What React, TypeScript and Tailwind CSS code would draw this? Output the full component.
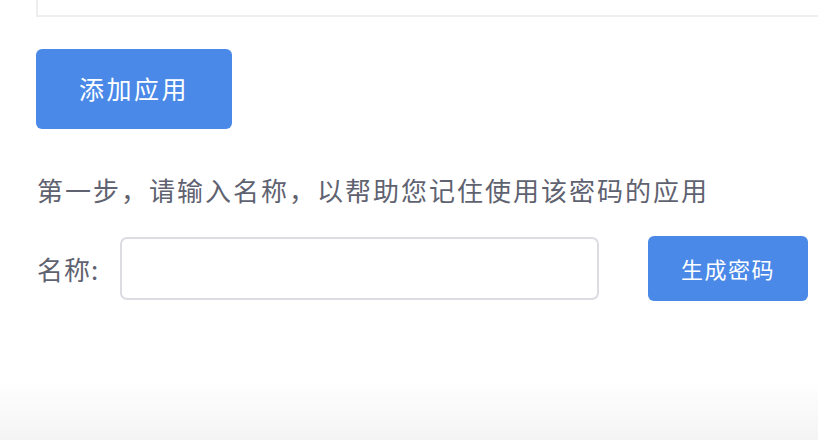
import React from "react";

const font = { fontFamily: '"Noto Sans CJK SC", "Noto Sans", sans-serif' };

export default function App() {
  return (
    <div className="w-[818px] h-[440px] bg-white flex flex-col overflow-hidden" style={font}>
      <div className="ml-[36px] h-[17px] border-l-2 border-b-2 border-[#eeeeee] shrink-0" />
      <div className="pl-[36px] pt-[32px]">
        <button className="w-[196px] h-[80px] rounded-[6px] bg-[#4a89e8] text-white text-[25px] tracking-[2.5px] flex items-center justify-center">
          添加应用
        </button>
      </div>
      <div className="pl-[37px] mt-[43px] text-[26px] leading-[36px] tracking-[2px] text-[#5f6270]">
        第一步，请输入名称，以帮助您记住使用该密码的应用
      </div>
      <div className="pl-[37px] mt-[28px] flex items-center">
        <span className="text-[26px] tracking-[1px] text-[#5f6270] w-[83px]">名称:</span>
        <input className="w-[479px] h-[63px] border-2 border-[#dcdde2] rounded-[7px] outline-none px-3" />
        <button className="ml-[49px] w-[160px] h-[65px] rounded-[6px] bg-[#4a89e8] text-white text-[22px] tracking-[1.5px] flex items-center justify-center">
          生成密码
        </button>
      </div>
      <div className="mt-auto h-[60px] shrink-0 bg-gradient-to-b from-white to-[#f4f4f4]" />
    </div>
  );
}
